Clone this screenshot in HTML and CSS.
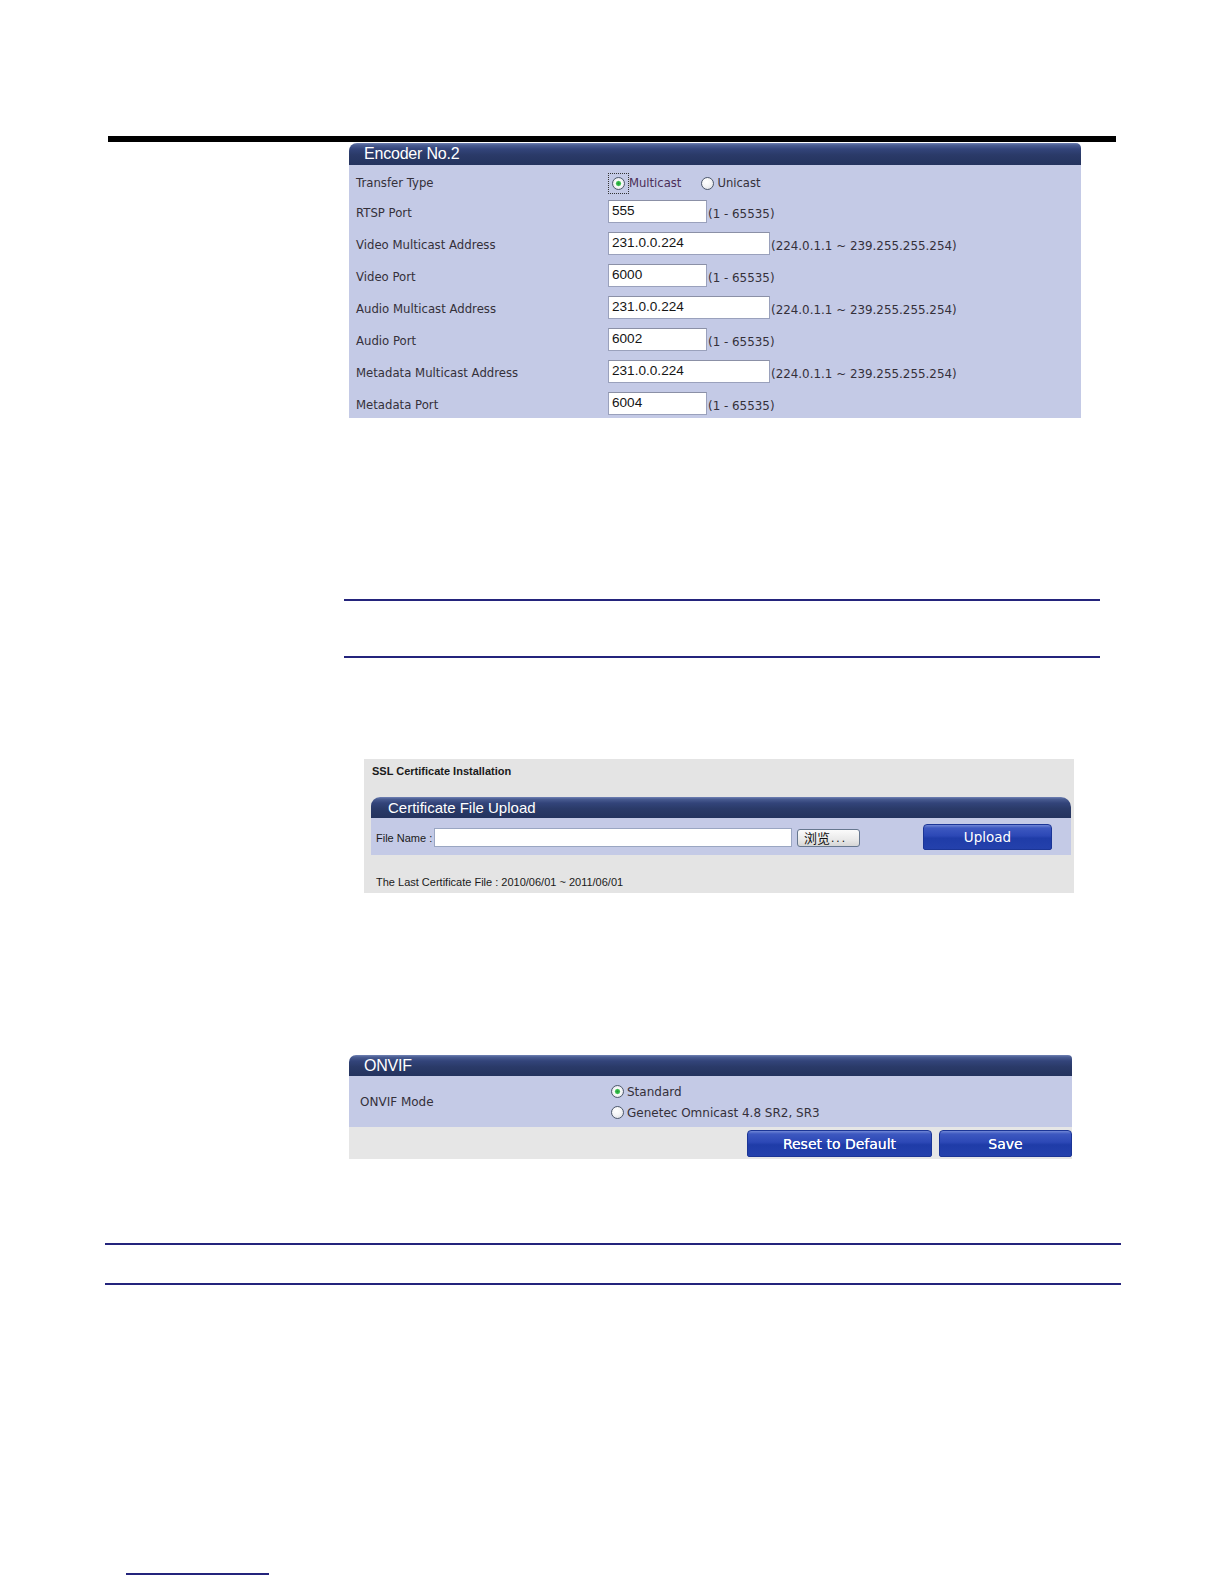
FILE: index.html
```html
<!DOCTYPE html>
<html>
<head>
<meta charset="utf-8">
<link rel="stylesheet" href="styles.css">
</head>
<body>
<div class="topbar"></div>

<section class="panel encoder">
  <div class="panel-head">Encoder No.2</div>
  <div class="panel-body">
    <div class="row first">
      <div class="lbl">Transfer Type</div>
      <div class="field">
        <span class="focus"><span class="radio on"></span></span><span class="opt sel">Multicast</span>
        <span class="radio gap"></span><span class="opt">Unicast</span>
      </div>
    </div>
    <div class="row"><div class="lbl">RTSP Port</div><div class="field"><span class="inp short">555</span><span class="range">(1 - 65535)</span></div></div>
    <div class="row"><div class="lbl">Video Multicast Address</div><div class="field"><span class="inp long">231.0.0.224</span><span class="range">(224.0.1.1 ~ 239.255.255.254)</span></div></div>
    <div class="row"><div class="lbl">Video Port</div><div class="field"><span class="inp short">6000</span><span class="range">(1 - 65535)</span></div></div>
    <div class="row"><div class="lbl">Audio Multicast Address</div><div class="field"><span class="inp long">231.0.0.224</span><span class="range">(224.0.1.1 ~ 239.255.255.254)</span></div></div>
    <div class="row"><div class="lbl">Audio Port</div><div class="field"><span class="inp short">6002</span><span class="range">(1 - 65535)</span></div></div>
    <div class="row"><div class="lbl">Metadata Multicast Address</div><div class="field"><span class="inp long">231.0.0.224</span><span class="range">(224.0.1.1 ~ 239.255.255.254)</span></div></div>
    <div class="row"><div class="lbl">Metadata Port</div><div class="field"><span class="inp short">6004</span><span class="range">(1 - 65535)</span></div></div>
  </div>
</section>

<div class="rule r1"></div>
<div class="rule r2"></div>

<section class="ssl">
  <div class="ssl-title">SSL Certificate Installation</div>
  <div class="ssl-inner">
    <div class="panel-head small">Certificate File Upload</div>
    <div class="ssl-row">
      <span class="fn">File Name :</span>
      <span class="file-inp"></span>
      <span class="browse"><span class="cjk">浏览</span><span class="dots">...</span></span>
      <span class="btn upload">Upload</span>
    </div>
  </div>
  <div class="last">The Last Certificate File : 2010/06/01 ~ 2011/06/01</div>
</section>

<section class="panel onvif">
  <div class="panel-head">ONVIF</div>
  <div class="onvif-body">
    <div class="lbl olbl">ONVIF Mode</div>
    <div class="opts">
      <div class="oopt"><span class="radio on"></span><span class="otxt">Standard</span></div>
      <div class="oopt"><span class="radio"></span><span class="otxt">Genetec Omnicast 4.8 SR2, SR3</span></div>
    </div>
  </div>
  <div class="onvif-foot">
    <span class="btn reset">Reset to Default</span>
    <span class="btn save">Save</span>
  </div>
</section>

<div class="rule r3"></div>
<div class="rule r4"></div>
<div class="rule r5"></div>
</body>
</html>
```

FILE: styles.css
```css
html, body {
  margin: 0;
  padding: 0;
  background: #ffffff;
}
body {
  width: 1224px;
  height: 1584px;
  overflow: hidden;
  font-family: "DejaVu Sans", Verdana, sans-serif;
}

.topbar {
  margin: 136px 0 0 108px;
  width: 1008px;
  height: 6px;
  background: #000;
}

.panel-head {
  height: 22px;
  box-sizing: border-box;
  padding-left: 15px;
  border-radius: 8px 5px 0 0;
  background: linear-gradient(#7284b6 0, #4a5d92 2px, #33447a 6px, #2a3a68 12px, #24335e 100%);
  color: #fff;
  font-family: "Liberation Sans", Arial, sans-serif;
  font-size: 16px;
  line-height: 22px;
  letter-spacing: -0.2px;
}

.encoder {
  margin: 1px 0 0 349px;
  width: 732px;
}
.panel-body {
  background: #c4cae6;
  padding: 6px 0 0 7px;
  height: 253px;
  box-sizing: border-box;
  overflow: hidden;
}
.row {
  display: flex;
  align-items: center;
  height: 32px;
}
.row.first {
  height: 24px;
}
.lbl {
  width: 252px;
  flex: none;
  font-size: 11.7px;
  color: #34303a;
  padding-top: 3px;
}
.row.first .lbl {
  padding-top: 0;
}
.field {
  display: flex;
  align-items: center;
}
.inp {
  box-sizing: border-box;
  height: 23px;
  background: #fff;
  border: 1px solid #9aa1bc;
  border-top-color: #8b90a6;
  padding-left: 3px;
  font-family: "Liberation Sans", Arial, sans-serif;
  font-size: 13.6px;
  line-height: 19px;
  color: #151515;
}
.inp.short { width: 99px; }
.inp.long { width: 162px; }
.range {
  margin-left: 1px;
  padding-top: 5px;
  font-size: 11.9px;
  color: #34303a;
}

.focus {
  display: inline-flex;
  box-sizing: border-box;
  width: 21px;
  height: 21px;
  align-items: center;
  justify-content: center;
  border: 1px dotted #333;
}
.radio {
  display: inline-block;
  box-sizing: border-box;
  width: 13px;
  height: 13px;
  border-radius: 50%;
  border: 1px solid #4d586b;
  background: radial-gradient(circle at 40% 35%, #ffffff 0, #f4f4f6 45%, #d5d8e0 100%);
  flex: none;
}
.radio.on {
  background: radial-gradient(circle at center, #1f9a35 0, #3bbf4f 2px, #ffffff 3.2px, #f2f2f4 55%, #d5d8e0 100%);
}
.opt {
  font-size: 11.6px;
  color: #34303a;
  margin-left: 0;
}
.opt.sel {
  color: #4b2e58;
}
.radio.gap {
  margin-left: 20px;
  margin-right: 3px;
}

.rule {
  height: 2px;
  background: #24247c;
}
.r1 { margin: 181px 0 0 344px; width: 756px; }
.r2 { margin: 55px 0 0 344px; width: 756px; }
.r3 { margin: 84px 0 0 105px; width: 1016px; }
.r4 { margin: 38px 0 0 105px; width: 1016px; }
.r5 { margin: 288px 0 0 126px; width: 143px; }

.ssl {
  margin: 101px 0 0 364px;
  width: 710px;
  height: 134px;
  box-sizing: border-box;
  background: #e4e4e4;
  padding-top: 4px;
  font-family: "Liberation Sans", Arial, sans-serif;
  color: #1a1a1a;
}
.ssl-title {
  padding-left: 8px;
  font-size: 11px;
  font-weight: bold;
  line-height: 16px;
}
.ssl-inner {
  margin: 18px 3px 0 7px;
}
.panel-head.small {
  height: 21px;
  line-height: 21px;
  font-size: 15px;
  padding-left: 17px;
  border-radius: 9px 10px 0 0;
  letter-spacing: 0;
}
.ssl-row {
  display: flex;
  align-items: center;
  height: 37px;
  background: #c4cae6;
  padding-left: 5px;
}
.fn {
  font-size: 11px;
  width: 58px;
  flex: none;
  padding-top: 3px;
}
.file-inp {
  box-sizing: border-box;
  width: 358px;
  height: 19px;
  background: #fff;
  border: 1px solid #9aa6c2;
  margin-top: 2px;
}
.browse {
  box-sizing: border-box;
  width: 63px;
  height: 18px;
  margin-left: 5px;
  margin-top: 3px;
  border: 1px solid #66778f;
  border-radius: 3px;
  background: linear-gradient(#fbfbfb, #e9e9e9 60%, #d6d6d6);
  display: flex;
  align-items: center;
  padding-left: 6px;
  color: #111;
  font-size: 12px;
  line-height: 14px;
}
.cjk {
  font-family: "Noto Sans CJK SC", sans-serif;
  font-size: 13px;
}
.dots {
  letter-spacing: 2px;
  margin-left: 1px;
}
.btn {
  box-sizing: border-box;
  display: inline-flex;
  align-items: center;
  justify-content: center;
  color: #fff;
  font-family: "DejaVu Sans", Verdana, sans-serif;
  border: 1px solid #1b3596;
  border-radius: 4px 4px 2px 2px;
  background: linear-gradient(#6f86d6 0, #3d58c0 3px, #2c48b6 45%, #1f3ca8 55%, #2441ac 100%);
}
.upload {
  width: 129px;
  height: 26px;
  margin-left: auto;
  margin-right: 19px;
  font-size: 13.5px;
  margin-top: 1px;
}
.last {
  margin-top: 19px;
  padding-left: 12px;
  font-size: 11px;
  line-height: 16px;
}

.onvif {
  margin: 162px 0 0 349px;
  width: 723px;
}
.onvif .panel-head {
  height: 21px;
  line-height: 21px;
  border-radius: 7px 4px 0 0;
}
.onvif-body {
  display: flex;
  align-items: center;
  height: 51px;
  background: #c4cae6;
  padding-left: 11px;
}
.olbl {
  width: 251px;
  font-size: 12px;
  padding-top: 0;
}
.opts {
  display: flex;
  flex-direction: column;
  padding-top: 1px;
}
.oopt {
  display: flex;
  align-items: center;
  height: 21px;
}
.otxt {
  margin-left: 3px;
  font-size: 12px;
  color: #34303a;
}
.onvif-foot {
  display: flex;
  justify-content: flex-end;
  gap: 7px;
  height: 32px;
  box-sizing: border-box;
  padding-top: 3px;
  background: #e6e6e6;
}
.reset, .save {
  height: 27px;
  font-size: 14px;
  text-shadow: 0 0 0.5px #fff;
}
.reset { width: 185px; }
.save { width: 133px; }
```
